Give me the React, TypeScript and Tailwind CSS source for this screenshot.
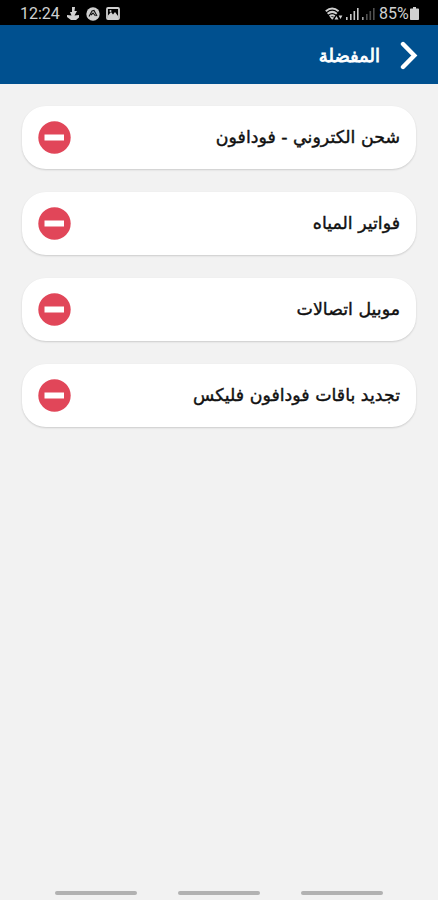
import React from "react";

const favourites = [
  "شحن الكتروني - فودافون",
  "فواتير المياه",
  "موبيل اتصالات",
  "تجديد باقات فودافون فليكس",
];

function SignalBars({ dim }: { dim?: boolean }) {
  return (
    <svg width="14" height="13" viewBox="0 0 14 13" fill="#c9c9c9">
      <rect x="0" y="10" width="1.6" height="3" opacity={dim ? 0.8 : 1} />
      <rect x="4" y="7" width="1.6" height="6" opacity={dim ? 0.4 : 1} />
      <rect x="7.5" y="4" width="1.6" height="9" opacity={dim ? 0.4 : 1} />
      <rect x="11" y="1" width="1.6" height="12" opacity={dim ? 0.4 : 1} />
    </svg>
  );
}

function StatusBar() {
  return (
    <div
      dir="ltr"
      className="flex h-[25px] items-center justify-between bg-black pt-[2px] pr-[19px] pl-[20px] font-['Roboto',sans-serif] text-[16px] leading-none text-[#d0d0d0]"
    >
      <div className="flex items-center">
        <span className="w-[41px] whitespace-nowrap">12:24</span>
        {/* Download */}
        <svg className="ml-[6px]" width="13" height="14" viewBox="0 0 13 14">
          <path
            d="M5 0h3l-.5 4H10L7.5 8.5 12 8v2.5L9 13H4L0 10V8l4.5.5L3 5h2z"
            fill="#d0d0d0"
          />
        </svg>
        {/* App notification */}
        <svg className="ml-[6px]" width="14" height="14" viewBox="0 0 14 14">
          <circle cx="7" cy="7" r="6.7" fill="#d0d0d0" />
          <path
            d="M3 9.5 6 4l2-.5L11 9M5 8l2-2 2.5 3"
            fill="none"
            stroke="#111"
            strokeWidth="1.1"
          />
        </svg>
        {/* Picture */}
        <svg className="ml-[6px]" width="14" height="13" viewBox="0 0 14 13">
          <rect
            x="1"
            y="1"
            width="12"
            height="11"
            rx="1"
            fill="none"
            stroke="#d0d0d0"
            strokeWidth="1.8"
          />
          <path d="m2 11V8.5L5 5l2 2.5L9 5l3 4v2z" fill="#d0d0d0" />
          <circle cx="4.5" cy="4" r="1" fill="#d0d0d0" />
        </svg>
      </div>

      <div className="flex items-center">
        <svg width="18" height="14" viewBox="0 0 18 14">
          <path
            d="M.8 4.2Q7.2-1.2 13.6 4.2M2.6 6.7q4.6-3.7 9.2 0M4.6 9.2q2.6-2 5.2 0"
            fill="none"
            stroke="#d0d0d0"
            strokeWidth="2"
          />
          <path d="m4.5 9.5 2.7 3.2 2-2.2z" fill="#d0d0d0" />
          <path d="m9.5 12.5 2-3.5 2 3.5zM13.6 8.5h3.8l-1.9 3.5z" fill="#d0d0d0" />
        </svg>
        <span className="ml-[3px]">
          <SignalBars />
        </span>
        <span className="ml-[2px]">
          <SignalBars dim />
        </span>
        <span className="ml-[3px] w-[31px] whitespace-nowrap">85%</span>
        <svg width="9" height="13" viewBox="0 0 9 13" fill="#d0d0d0">
          <path d="M3 0h3v1.5h2.2q.8 0 .8.8v9.9q0 .8-.8.8H.8q-.8 0-.8-.8V2.3q0-.8.8-.8H3z" />
        </svg>
      </div>
    </div>
  );
}

function RemoveButton() {
  return (
    <button type="button" className="shrink-0">
      <svg width="33" height="33" viewBox="0 0 33 33">
        <circle cx="16.5" cy="16.5" r="16.2" fill="#e14659" />
        <rect x="6.5" y="13.5" width="19.5" height="6" fill="white" />
      </svg>
    </button>
  );
}

export default function App() {
  return (
    <div
      dir="rtl"
      lang="ar"
      className="flex h-screen flex-col bg-[#f2f2f2] font-['DejaVu_Sans',sans-serif]"
    >
      <StatusBar />

      {/* HEADER */}
      <header className="flex h-[59px] items-center bg-[#00508f] pt-px pr-[20px] text-white">
        <svg
          width="18"
          height="29"
          viewBox="0 0 18 29"
          fill="none"
          stroke="white"
          strokeWidth="4.4"
          strokeLinecap="round"
        >
          <path d="M3 3 14.3 14.5 3 26" />
        </svg>
        <h1 className="mr-[20px] text-[18px] font-medium [-webkit-text-stroke:0.8px_white]">
          المفضلة
        </h1>
      </header>

      {/* LIST */}
      <ul className="flex flex-1 flex-col gap-[23px] px-[22px] pt-[22px]">
        {favourites.map((name) => (
          <li
            key={name}
            className="flex h-[63px] items-center justify-between rounded-[24px] bg-white pr-[16px] pl-[16px] shadow-[0_1px_2px_rgba(0,0,0,0.16)]"
          >
            <span className="text-[17.4px] font-medium whitespace-nowrap text-[#111] [-webkit-text-stroke:0.4px_#111]">
              {name}
            </span>
            <RemoveButton />
          </li>
        ))}
      </ul>

      {/* NAVIGATION BAR */}
      <nav className="flex h-[12px] justify-center gap-[41px]">
        <span className="mt-[3px] h-[4px] w-[82px] rounded-full bg-[#b2b2b2]" />
        <span className="mt-[3px] h-[4px] w-[82px] rounded-full bg-[#b2b2b2]" />
        <span className="mt-[3px] h-[4px] w-[82px] rounded-full bg-[#b2b2b2]" />
      </nav>
    </div>
  );
}
